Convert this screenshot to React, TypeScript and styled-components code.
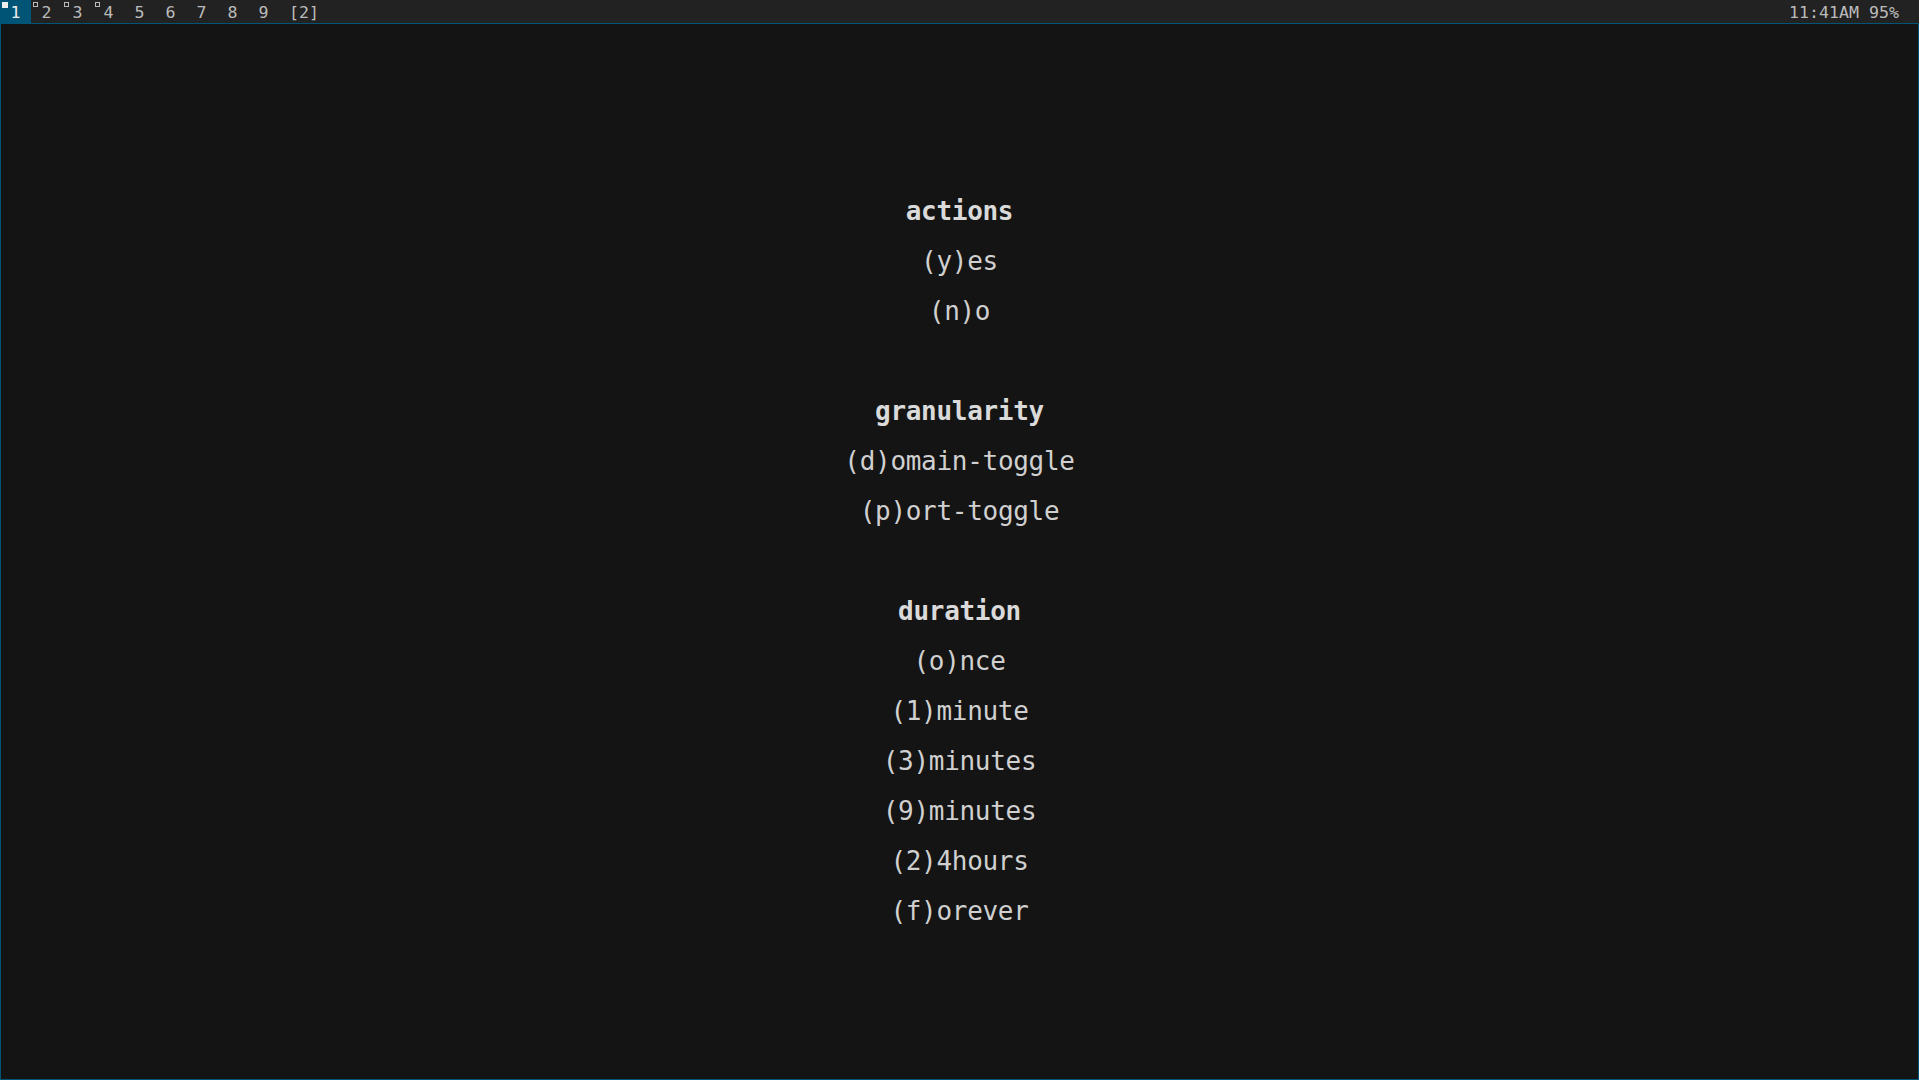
import React from "react";
import styled, { createGlobalStyle } from "styled-components";

const GlobalStyle = createGlobalStyle`
  html, body {
    margin: 0;
    padding: 0;
    background: #141414;
    overflow: hidden;
  }
`;

const Screen = styled.div`
  width: 1919px;
  height: 1080px;
  display: flex;
  flex-direction: column;
  background: #141414;
`;

const Bar = styled.div`
  height: 23px;
  flex: 0 0 23px;
  display: flex;
  align-items: stretch;
  overflow: hidden;
  background: #222222;
  color: #bbbbbb;
  font-family: "DejaVu Sans Mono", "Liberation Mono", monospace;
  font-size: 16.6px;
  line-height: 25px;
  white-space: pre;
`;

const Tag = styled.div<{ $selected?: boolean }>`
  position: relative;
  width: 31px;
  text-align: center;
  background: ${(p) => (p.$selected ? "#005577" : "transparent")};
  color: ${(p) => (p.$selected ? "#eeeeee" : "#bbbbbb")};
`;

const Indicator = styled.span<{ $filled?: boolean; $light?: boolean }>`
  position: absolute;
  left: 2px;
  top: 2px;
  width: ${(p) => (p.$filled ? "6px" : "5px")};
  height: ${(p) => (p.$filled ? "6px" : "5px")};
  box-sizing: border-box;
  background: ${(p) => (p.$filled ? (p.$light ? "#eeeeee" : "#bbbbbb") : "transparent")};
  border: ${(p) => (p.$filled ? "none" : `1px solid ${p.$light ? "#eeeeee" : "#bbbbbb"}`)};
`;

const LayoutSymbol = styled.div`
  padding: 0 10px;
`;

const Spacer = styled.div`
  flex: 1;
`;

const Status = styled.div`
  padding-right: 20px;
`;

const Window = styled.div`
  flex: 1;
  border: 1px solid #005577;
  background: #141414;
  display: flex;
  flex-direction: column;
  align-items: center;
  padding-top: 161.5px;
`;

const Menu = styled.div`
  display: flex;
  flex-direction: column;
  align-items: center;
  font-family: "DejaVu Sans Mono", "Liberation Mono", monospace;
  font-size: 26px;
  line-height: 50px;
  letter-spacing: -0.3px;
  color: #d0d0d0;
  white-space: pre;
`;

const Section = styled.div`
  display: flex;
  flex-direction: column;
  align-items: center;
  & + & {
    margin-top: 50px;
  }
`;

const Heading = styled.div`
  font-weight: bold;
  color: #dadada;
`;

const Item = styled.div``;

const tags = [
  { label: "1", selected: true, occupied: true, filled: true },
  { label: "2", occupied: true },
  { label: "3", occupied: true },
  { label: "4", occupied: true },
  { label: "5" },
  { label: "6" },
  { label: "7" },
  { label: "8" },
  { label: "9" },
];

const sections = [
  { title: "actions", items: ["(y)es", "(n)o"] },
  { title: "granularity", items: ["(d)omain-toggle", "(p)ort-toggle"] },
  {
    title: "duration",
    items: ["(o)nce", "(1)minute", "(3)minutes", "(9)minutes", "(2)4hours", "(f)orever"],
  },
];

export default function App() {
  return (
    <>
      <GlobalStyle />
      <Screen>
        <Bar>
          {tags.map((t) => (
            <Tag key={t.label} $selected={t.selected}>
              {t.occupied && <Indicator $filled={t.filled} $light={t.selected} />}
              {t.label}
            </Tag>
          ))}
          <LayoutSymbol>[2]</LayoutSymbol>
          <Spacer />
          <Status>11:41AM 95%</Status>
        </Bar>
        <Window>
          <Menu>
            {sections.map((s) => (
              <Section key={s.title}>
                <Heading>{s.title}</Heading>
                {s.items.map((i) => (
                  <Item key={i}>{i}</Item>
                ))}
              </Section>
            ))}
          </Menu>
        </Window>
      </Screen>
    </>
  );
}
